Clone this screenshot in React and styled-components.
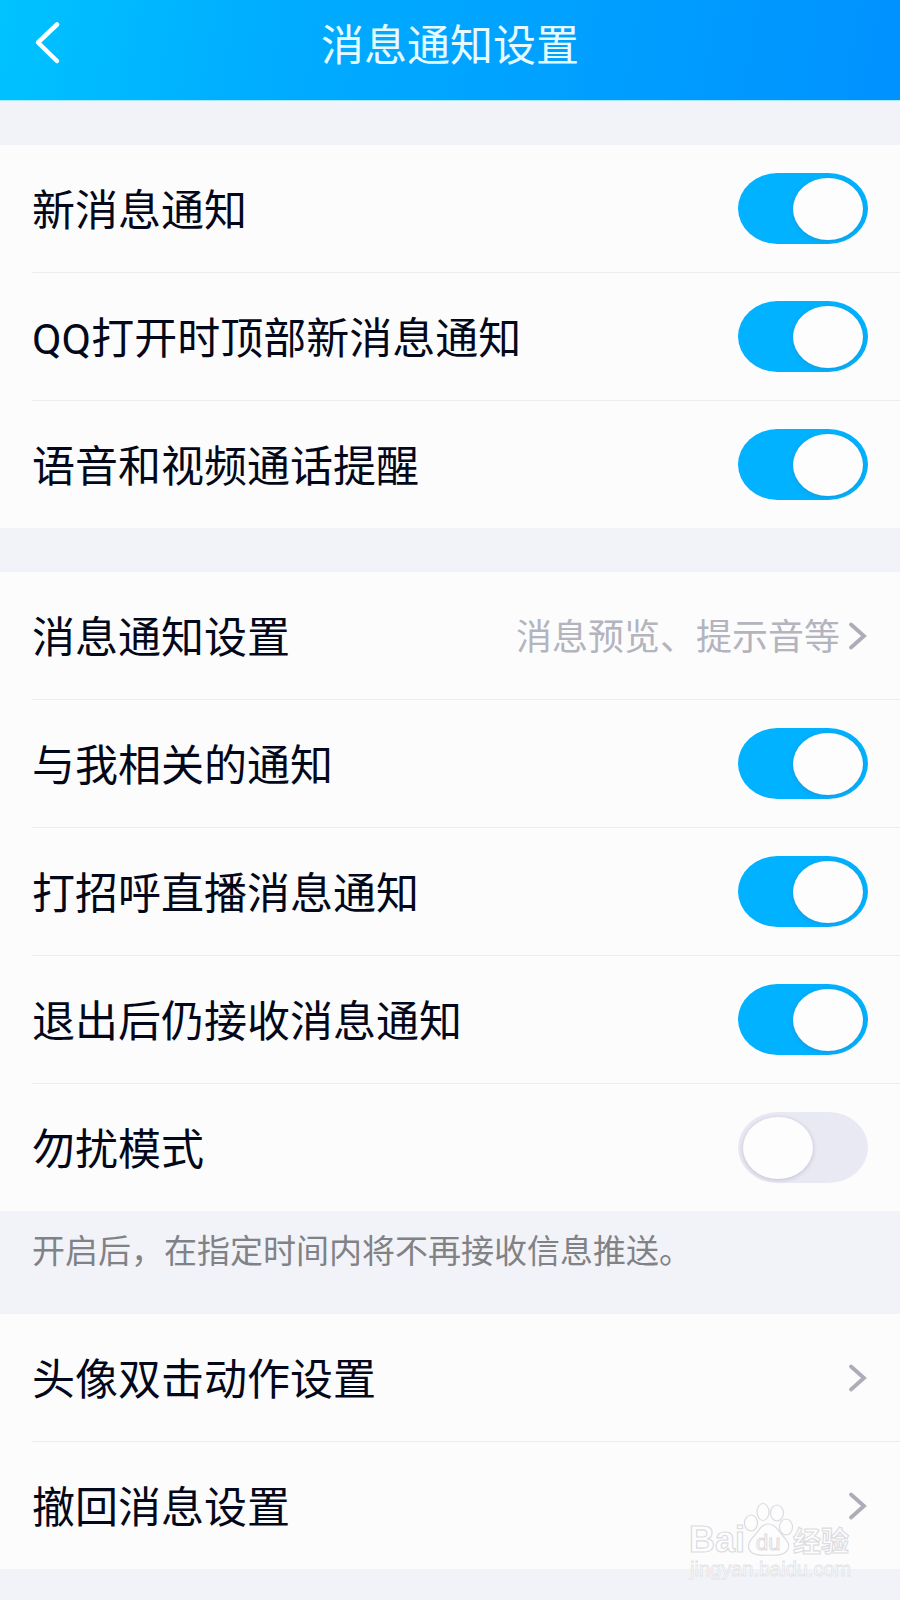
import { useState } from 'react';
import styled, { createGlobalStyle } from 'styled-components';

const GlobalStyle = createGlobalStyle`
  * {
    box-sizing: border-box;
  }

  body {
    margin: 0;
    background: #f2f3f8;
    font-family: Roboto, 'Noto Sans CJK SC', sans-serif;
    color: #03081a;
  }
`;

const Page = styled.div`
  position: relative;
  min-height: 100vh;
`;

const Header = styled.header`
  display: grid;
  grid-template-columns: 100px 1fr 100px;
  align-items: center;
  height: 101px;
  padding-bottom: 14px;
  border-bottom: 1px solid #a5ecff;
  background: linear-gradient(100deg, #00c3ff 0%, #00adff 30%, #0092ff 100%);
`;

const BackButton = styled.button`
  display: flex;
  align-items: center;
  height: 60px;
  padding: 0 0 0 32px;
  border: 0;
  background: none;
  color: #fff;
`;

const Title = styled.h1`
  margin: 0;
  padding-top: 6px;
  color: #e6fbff;
  font-size: 43px;
  font-weight: 400;
  line-height: 60px;
  text-align: center;
`;

const Group = styled.section`
  margin-top: ${({ $flush }) => ($flush ? '0' : '44px')};
  padding-left: 32px;
  background: #fcfcfd;
`;

const rowStyle = `
  display: flex;
  align-items: center;
  justify-content: space-between;
  width: 100%;
  height: 127px;
  padding: 0 32px 0 0;
`;

const Item = styled.div`
  & + & {
    border-top: 1px solid #ebecef;
  }
`;

const SwitchRow = styled.label`
  ${rowStyle}
`;

const LinkRow = styled.a`
  ${rowStyle}
  color: inherit;
  text-decoration: none;
`;

const Label = styled.span`
  padding-top: 5px;
  font-size: 43px;
  line-height: 60px;
`;

const Detail = styled.span`
  display: flex;
  align-items: center;
  gap: 8px;
`;

const DetailText = styled.span`
  padding-top: 5px;
  color: #b3b4be;
  font-size: 36px;
  line-height: 60px;
`;

const Switch = styled.input`
  appearance: none;
  flex: none;
  display: flex;
  align-items: center;
  justify-content: flex-start;
  width: 130px;
  height: 71px;
  margin: 0;
  padding: 0 5px;
  border-radius: 40px / 36px;
  background: #e9e9f4;

  &::before {
    content: '';
    width: 70px;
    height: 62px;
    border-radius: 50%;
    background: #fdfdfe;
    box-shadow: 0 1px 4px rgba(90, 90, 130, 0.3);
  }

  &:checked {
    justify-content: flex-end;
    background: #00b2ff;
  }
`;

const Note = styled.p`
  height: 103px;
  margin: 0;
  padding: 18px 32px 0;
  color: #818285;
  font-size: 33px;
  line-height: 46px;
`;

const Watermark = styled.svg`
  position: absolute;
  right: 40px;
  bottom: 20px;
  pointer-events: none;
`;

const messageSwitches = [
  { id: 'new', label: '新消息通知' },
  { id: 'banner', label: 'QQ打开时顶部新消息通知' },
  { id: 'call', label: '语音和视频通话提醒' },
];

const noticeSwitches = [
  { id: 'related', label: '与我相关的通知' },
  { id: 'live', label: '打招呼直播消息通知' },
  { id: 'logout', label: '退出后仍接收消息通知' },
  { id: 'dnd', label: '勿扰模式' },
];

const ArrowRight = () => (
  <svg width="20" height="30" viewBox="0 0 20 30" fill="none" aria-hidden="true">
    <path d="M3 3.5 L16 15 L3 26.5" stroke="#acadb8" strokeWidth="3.8" strokeLinecap="round" />
  </svg>
);

const SwitchItem = ({ label, checked, onChange }) => (
  <Item>
    <SwitchRow>
      <Label>{label}</Label>
      <Switch type="checkbox" role="switch" checked={checked} onChange={onChange} />
    </SwitchRow>
  </Item>
);

const LinkItem = ({ label, detail }) => (
  <Item>
    <LinkRow href="#">
      <Label>{label}</Label>
      <Detail>
        {detail && <DetailText>{detail}</DetailText>}
        <ArrowRight />
      </Detail>
    </LinkRow>
  </Item>
);

const BaiduMark = () => (
  <Watermark width="176" height="90" viewBox="0 0 176 90">
    <g fill="#fdfdfe" stroke="#dcdce0" strokeWidth="1.2">
      <text x="5" y="62" fontFamily="Liberation Sans, sans-serif" fontSize="36" fontWeight="700">Bai</text>
      <ellipse cx="67" cy="33" rx="6.5" ry="8" />
      <ellipse cx="79" cy="22" rx="6" ry="8.5" />
      <ellipse cx="93" cy="23" rx="6.5" ry="8" />
      <ellipse cx="102" cy="37" rx="6.5" ry="8" />
      <path d="M84 34 C91 34 94 40 98 45 C103 50 106 54 104 59 C102 65 95 66 84 65 C74 66 67 65 65 59 C63 54 67 49 71 45 C75 40 78 34 84 34 Z" />
      <text x="72" y="60" fontFamily="Liberation Sans, sans-serif" fontSize="22" strokeWidth="1">du</text>
      <text x="109" y="62" fontFamily="Noto Sans CJK SC, sans-serif" fontSize="28" fontWeight="700">经验</text>
      <text x="6" y="86" fontFamily="Liberation Sans, sans-serif" fontSize="20" stroke="#e3e3e7" strokeWidth="0.8">jingyan.baidu.com</text>
    </g>
  </Watermark>
);

const App = () => {
  const [enabled, setEnabled] = useState({
    new: true,
    banner: true,
    call: true,
    related: true,
    live: true,
    logout: true,
    dnd: false,
  });

  const toggle = (id) => setEnabled((prev) => ({ ...prev, [id]: !prev[id] }));

  const renderSwitch = ({ id, label }) => (
    <SwitchItem key={id} label={label} checked={enabled[id]} onChange={() => toggle(id)} />
  );

  return (
    <Page>
      <GlobalStyle />
      <Header>
        <BackButton type="button" aria-label="返回">
          <svg width="30" height="44" viewBox="0 0 30 44" fill="none">
            <path d="M25 3.5 L6 21.5 L25 40" stroke="currentColor" strokeWidth="4.5" strokeLinecap="round" strokeLinejoin="round" />
          </svg>
        </BackButton>
        <Title>消息通知设置</Title>
      </Header>

      <main>
        <Group>{messageSwitches.map(renderSwitch)}</Group>

        <Group>
          <LinkItem label="消息通知设置" detail="消息预览、提示音等" />
          {noticeSwitches.map(renderSwitch)}
        </Group>
        <Note>开启后，在指定时间内将不再接收信息推送。</Note>

        <Group $flush>
          <LinkItem label="头像双击动作设置" />
          <LinkItem label="撤回消息设置" />
        </Group>
      </main>

      <BaiduMark />
    </Page>
  );
};

export default App;
